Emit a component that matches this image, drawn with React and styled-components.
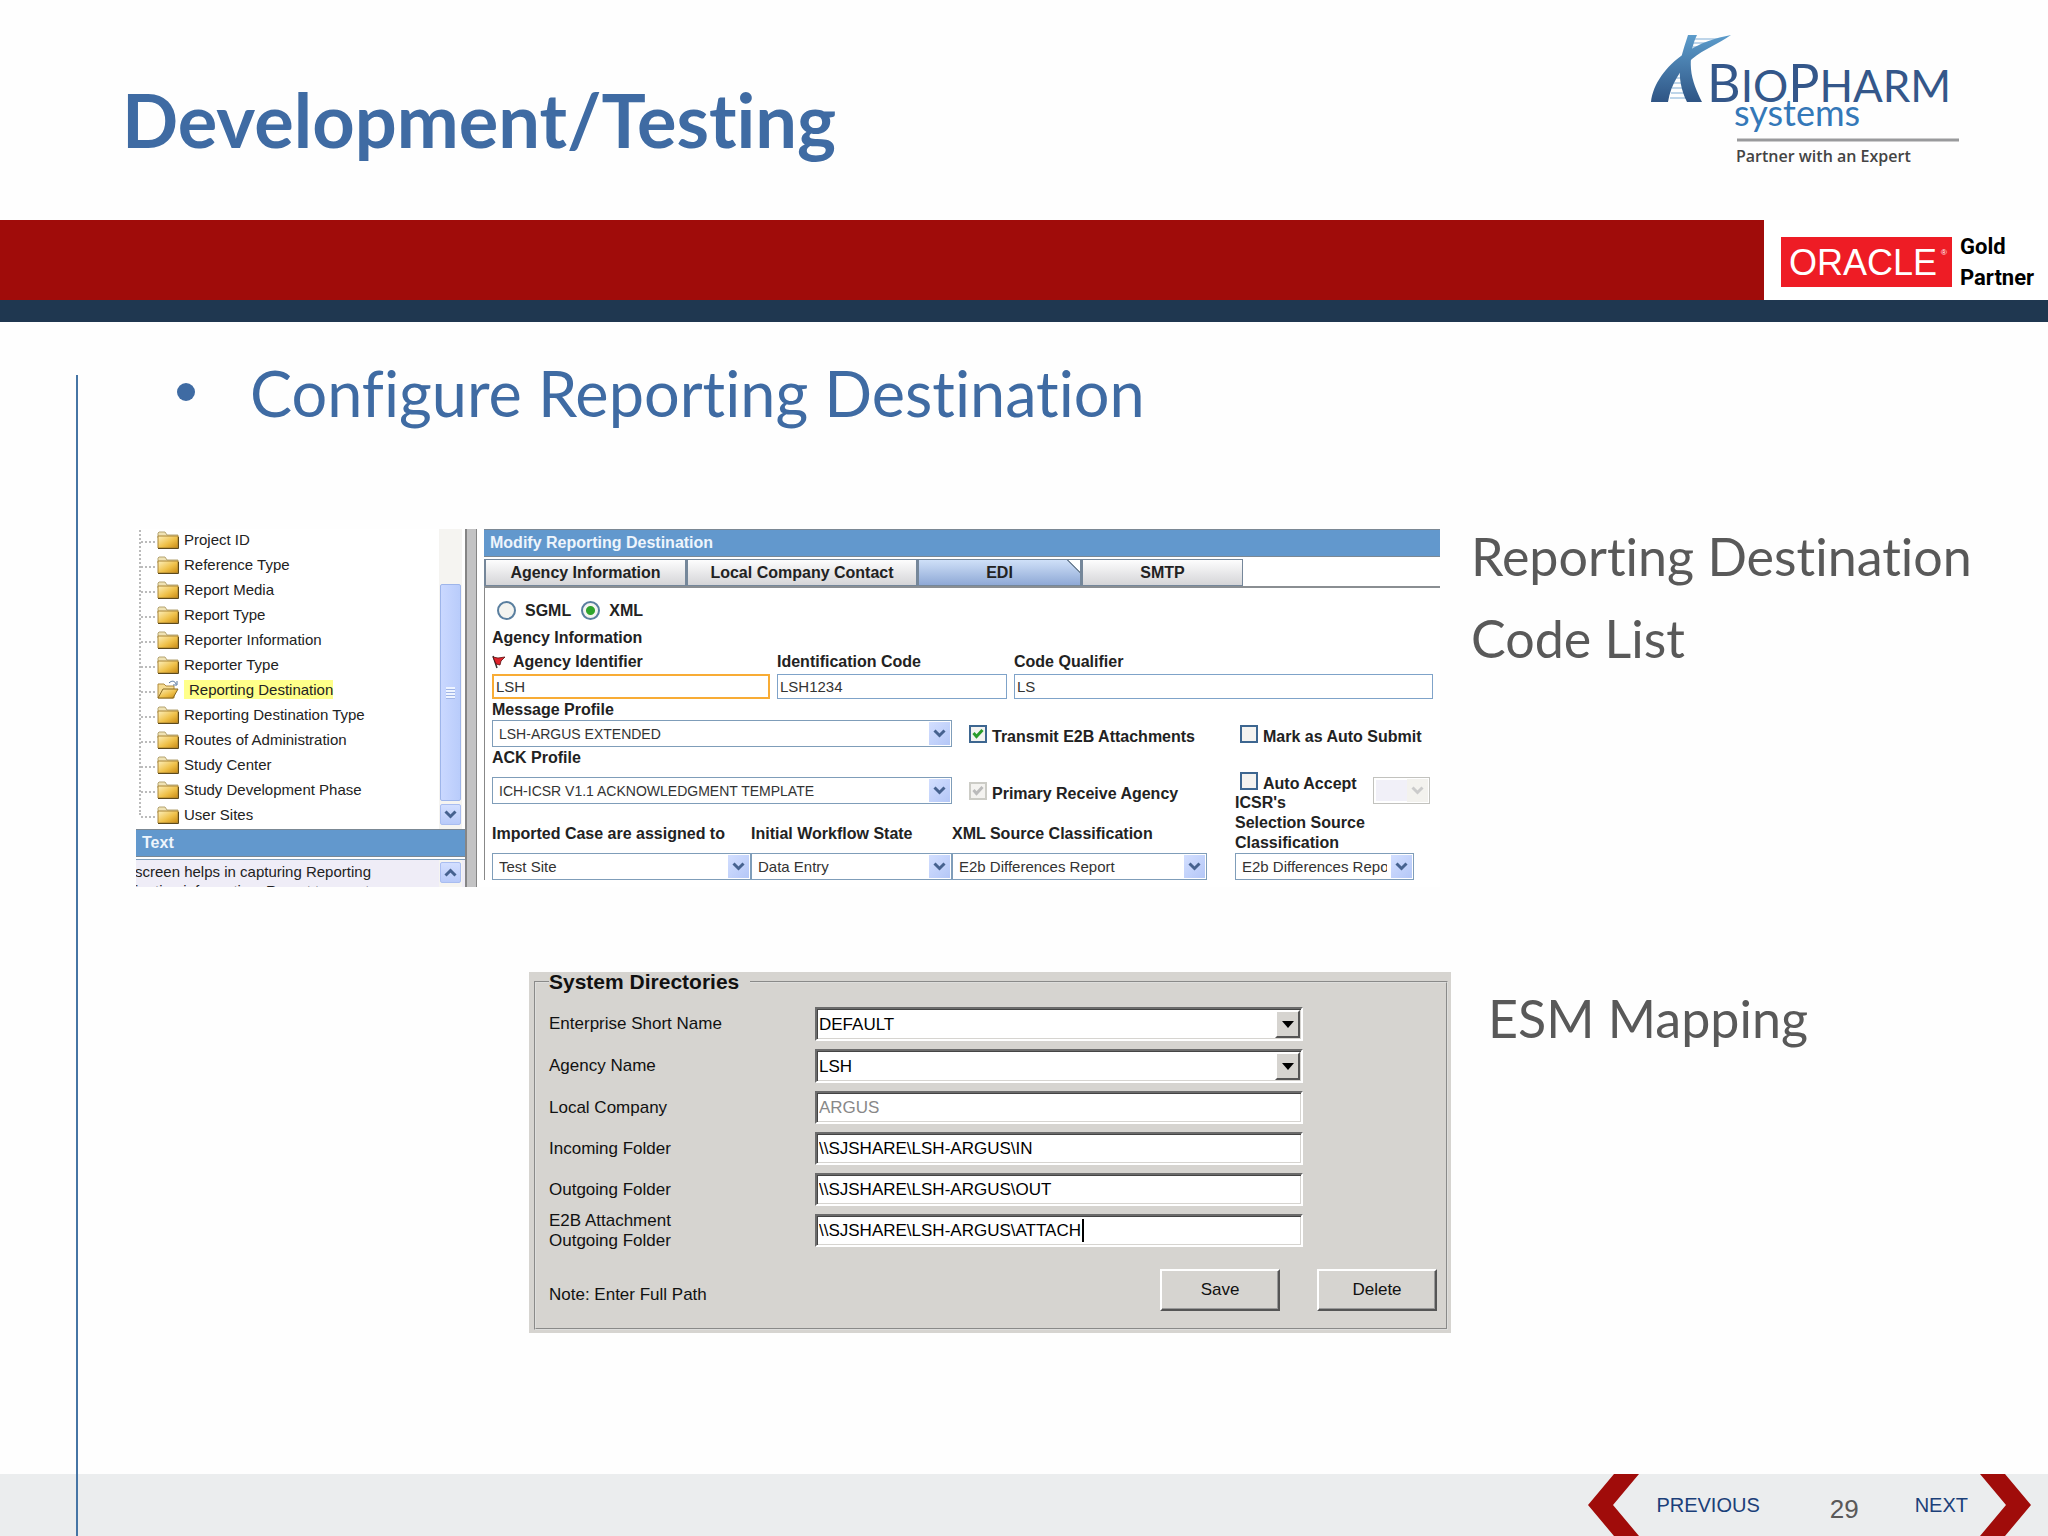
import React from "react";
import styled, { createGlobalStyle } from "styled-components";

const GlobalStyle = createGlobalStyle`
  *, *::before, *::after {
    box-sizing: border-box;
  }
  body {
    margin: 0;
    background: #fefefe;
    font-family: "Liberation Sans", Arial, sans-serif;
    font-variant-ligatures: no-common-ligatures;
  }
  button, input, select {
    font-family: inherit;
    margin: 0;
  }
`;

const Slide = styled.div`
  min-height: 100vh;
  display: flex;
  flex-direction: column;
  overflow: hidden;
`;

/* ---------- header ---------- */

const Header = styled.header`
  height: 220px;
  display: flex;
  justify-content: space-between;
  padding: 30px 84px 0 122px;
`;

const Title = styled.h1`
  margin: 0;
  font-family: Lato, Carlito, sans-serif;
  font-weight: bold;
  font-size: 74px;
  line-height: 180px;
  color: #3f6ba3;
`;

const Band = styled.div`
  height: 80px;
  display: flex;
  justify-content: flex-end;
  background: #a00c0a;
`;

const PartnerBadge = styled.div`
  width: 284px;
  display: flex;
  gap: 8px;
  padding: 17px 0 0 17px;
  background: #fff;
`;

const PartnerText = styled.p`
  margin: -6px 0 0;
  font: bold 22px/31px Roboto, Arial, sans-serif;
  color: #000;
`;

const Rule = styled.div`
  height: 22px;
  background: #1f3750;
`;

/* ---------- body ---------- */

const Main = styled.main`
  flex: 1;
  margin: 53px 0 0 76px;
  border-left: 2px solid #4675a5;
`;

const BulletList = styled.ul`
  list-style: none;
  margin: 0;
  padding: 0 0 0 97px;
`;

const BulletItem = styled.li`
  display: flex;
  height: 154px;
  font-family: Lato, Carlito, sans-serif;
  font-size: 63px;
  line-height: 36px;
  color: #3f6ba3;
  &::before {
    content: "";
    width: 18px;
    height: 18px;
    margin: 8px 55px 0 2px;
    border-radius: 50%;
    background: #3f6ba3;
  }
`;

const ExhibitRow = styled.section`
  display: grid;
  grid-template-columns: ${(p) => p.$columns};
  margin-bottom: 85px;
`;

const Caption = styled.p`
  grid-column: 3;
  margin: ${(p) => p.$top} 0 0;
  padding-left: ${(p) => p.$indent};
  font-family: Lato, Carlito, sans-serif;
  font-size: 52px;
  line-height: 82px;
  color: #595959;
`;

/* ---------- reporting destination screen ---------- */

const Screen = styled.div`
  grid-column: 2;
  height: 358px;
  display: grid;
  grid-template-columns: 329fr 12px 7px 956fr;
  overflow: hidden;
  background: #fff;
  font-size: 15px;
  color: #222;
`;

const Sidebar = styled.div`
  min-width: 0;
  display: flex;
  flex-direction: column;
`;

const TreePane = styled.div`
  height: 300px;
  display: flex;
  justify-content: space-between;
`;

const Tree = styled.ul`
  list-style: none;
  margin: -2px 0 14px 3px;
  padding: 0;
  border-left: 2px dotted #bbb;
`;

const TreeItem = styled.li`
  height: 25px;
  display: flex;
  align-items: center;
  &::before {
    content: "";
    width: 14px;
    border-top: 2px dotted #bbb;
    margin: 4px 2px 0 0;
  }
  & > svg {
    flex: none;
    margin-right: 5px;
  }
`;

const TreeLabel = styled.span`
  line-height: 19px;
  white-space: nowrap;
  ${(p) =>
    p.$active &&
    `
    background: #ffff8a;
    padding-left: 5px;
  `}
`;

const ScrollTrack = styled.div`
  width: 23px;
  margin-right: 3px;
  padding: ${(p) => p.$top} 1px 0;
  display: flex;
  flex-direction: column;
  gap: 3px;
  background: #f5f4f1;
`;

const ScrollThumb = styled.div`
  height: 217px;
  display: grid;
  place-content: center;
  border: 1px solid #9eb5ea;
  border-radius: 2px;
  background: linear-gradient(90deg, #cad8ff, #b9ccfb);
  &::before {
    content: "";
    width: 9px;
    height: 12px;
    background: repeating-linear-gradient(#eef4ff 0 2px, #9fb4e6 2px 3px);
  }
`;

const ScrollButton = styled.button`
  height: 21px;
  padding: 0;
  display: grid;
  place-content: center;
  border: 1px solid #a9bdf0;
  border-radius: 2px;
  background: linear-gradient(#d3dfff, #b8caf9);
`;

const PaneTitle = styled.h2`
  margin: 0;
  height: 28px;
  padding: 0 6px;
  border: solid #7b8894;
  border-width: 1px 0;
  background: #6298cd;
  font-weight: bold;
  font-size: 16px;
  line-height: 26px;
  color: #eef5fc;
`;

const HelpPane = styled.div`
  flex: 1;
  min-height: 0;
  margin-top: 2px;
  display: flex;
  justify-content: space-between;
  border-top: 1px solid #7f9db9;
  background: #efedf7;
  line-height: 19px;
  white-space: nowrap;
  & p {
    margin: 2px 0 0 -1px;
  }
`;

const Splitter = styled.div`
  border: solid #858585;
  border-width: 0 1px 0 2px;
  background: #c3c3c4;
`;

const FormPane = styled.div`
  grid-column: 4;
  min-width: 0;
`;

const Tabs = styled.div`
  display: grid;
  grid-template-columns: 202fr 231fr 164fr 162fr 197fr;
  height: 31px;
  padding-top: 2px;
  border-bottom: 2px solid #8a8e92;
`;

const Tab = styled.button`
  padding: 0;
  border: 1px solid #75879a;
  border-left-width: 2px;
  background: ${(p) =>
    p.$active
      ? "linear-gradient(45deg, transparent 0 93%, #75879a 93% 94%, #fff 94%), linear-gradient(#cfe0f8, #8fa9d6)"
      : "linear-gradient(#fdfdfd, #d5d5d8)"};
  font-size: 16px;
  font-weight: bold;
  color: #222;
`;

const Form = styled.form`
  padding: 8px 0 0 7px;
  border-left: 1px solid #888;
  font-size: 16px;
  font-weight: bold;
`;

const RadioRow = styled.div`
  height: 29px;
  display: flex;
  align-items: center;
  padding-left: 5px;
`;

const RadioLabel = styled.label`
  display: flex;
  align-items: center;
  gap: 9px;
  margin-right: 10px;
`;

const Radio = styled.input`
  appearance: none;
  width: 19px;
  height: 19px;
  border: 2px solid #5a7f9f;
  border-radius: 50%;
  background: #f4f4f0;
  &:checked {
    background: radial-gradient(circle, #2fa52c 0 4px, #f4f4f0 5px);
  }
`;

const SectionLabel = styled.p`
  margin: 0;
  line-height: 25px;
`;

const FieldGrid = styled.div`
  display: grid;
  grid-template-columns: 278fr 230fr 419fr;
  column-gap: 7px;
  padding-right: 7px;
`;

const Field = styled.div`
  min-width: 0;
  display: flex;
  flex-direction: column;
`;

const Label = styled.label`
  height: ${(p) => p.$height || "24px"};
  display: flex;
  align-items: center;
  gap: 8px;
  line-height: 20px;
  white-space: nowrap;
`;

const TextInput = styled.input`
  width: 100%;
  height: 25px;
  padding: 0 2px;
  border: ${(p) => (p.$focus ? "2px solid #f8ac35" : "1px solid #7fa3c9")};
  background: #fff;
  font-size: 15px;
  color: #333;
`;

const SelectFrame = styled.div`
  position: relative;
  height: 27px;
  opacity: ${(p) => (p.$disabled ? 0.6 : 1)};
  & > select {
    appearance: none;
    width: 100%;
    height: 100%;
    padding: 0 26px 0 6px;
    border: 1px solid ${(p) => (p.$disabled ? "#9a9a94" : "#7f9db9")};
    border-radius: 0;
    background: ${(p) => (p.$disabled ? "#e9e7f5" : "#fff")};
    box-shadow: inset 0 0 0 2px #fff;
    font-size: ${(p) => (p.$compact ? "14px" : "15px")};
    color: #333;
    opacity: 1;
  }
`;

const SelectArrow = styled.span`
  position: absolute;
  top: 2px;
  right: 2px;
  bottom: 2px;
  width: 21px;
  display: grid;
  place-content: center;
  background: ${(p) => (p.$disabled ? "#ecebe4" : "linear-gradient(135deg, #d3dfff, #b4c7f7)")};
  pointer-events: none;
`;

const ProfileGrid = styled.div`
  display: grid;
  grid-template-columns: 460fr 283fr 205fr;
`;

const AckField = styled.div`
  display: grid;
  row-gap: 9px;
`;

const CheckColumn = styled.div`
  min-width: 0;
  padding: ${(p) => p.$padding};
`;

const CheckLabel = styled.label`
  height: ${(p) => p.$height || "20px"};
  display: flex;
  align-items: flex-start;
  gap: 5px;
  line-height: 24px;
  white-space: nowrap;
`;

const Checkbox = styled.input`
  appearance: none;
  flex: none;
  width: 18px;
  height: 18px;
  border: 2px solid #3d6690;
  background: #f4f3f0;
  &:disabled {
    border-color: #ccccc6;
  }
`;

const CheckFrame = styled.span`
  position: relative;
  display: flex;
  & > svg {
    position: absolute;
    inset: 3px;
    pointer-events: none;
  }
`;

const AcceptRow = styled.div`
  display: flex;
  justify-content: space-between;
  height: 32px;
  & > ${SelectFrame} {
    width: 57px;
    margin: 5px 5px 0 0;
  }
`;

const SourceGrid = styled.div`
  display: grid;
  grid-template-columns: 259fr 201fr 255fr 28fr 179fr 26fr;
  align-items: end;
`;

const TallLabel = styled.label`
  display: block;
  margin-top: -11px;
  line-height: 20px;
`;

/* ---------- system directories dialog ---------- */

const Dialog = styled.div`
  grid-column: 2;
  height: 361px;
  padding: 0 3px 5px 5px;
  background: #d6d4d0;
  font-size: 17px;
  color: #111;
`;

const Group = styled.fieldset`
  min-width: 0;
  margin: 0;
  padding: 15px 9px 17px 13px;
  border: 2px groove #dededc;
`;

const Legend = styled.legend`
  padding: 0 11px 0 0;
  font-weight: bold;
  font-size: 21px;
  line-height: 20px;
`;

const DirectoryGrid = styled.div`
  display: grid;
  grid-template-columns: 266fr 488fr 134fr;
  row-gap: 8px;
`;

const DirectoryRow = styled.div`
  display: contents;
  & > label {
    grid-column: 1;
    align-self: center;
    margin: -4px 0;
    line-height: 20px;
    white-space: pre-line;
  }
  & > div {
    grid-column: 2;
  }
`;

const SunkenBox = styled.div`
  position: relative;
  height: ${(p) => (p.$select ? "34px" : "33px")};
  border: 2px solid;
  border-color: #6b6b6b #fff #fff #6b6b6b;
  background: #fff;
  box-shadow: inset 1px 1px #444, inset -1px -1px #d6d4d0;
  & > input,
  & > select {
    appearance: none;
    width: 100%;
    height: 100%;
    padding: 0 2px;
    border: 0;
    border-radius: 0;
    background: transparent;
    font-size: 17px;
    color: #000;
  }
  & > input:disabled {
    color: #888;
  }
`;

const ArrowButton = styled.span`
  position: absolute;
  top: 1px;
  right: 1px;
  bottom: 1px;
  width: 25px;
  display: grid;
  place-content: center;
  border: 2px solid;
  border-color: #fff #555 #555 #fff;
  background: #d6d4d0;
  pointer-events: none;
`;

const Caret = styled.span`
  position: absolute;
  top: 3px;
  bottom: 3px;
  left: 265px;
  width: 2px;
  background: #000;
`;

const DialogFooter = styled.div`
  display: flex;
  align-items: center;
  margin-top: 22px;
  gap: 37px;
`;

const Note = styled.p`
  flex: 1;
  margin: 10px 0 0;
`;

const PushButton = styled.button`
  width: 120px;
  height: 42px;
  border: 2px solid;
  border-color: #fff #555 #555 #fff;
  box-shadow: inset -1px -1px #999;
  background: #d6d4d0;
  font-size: 17px;
  color: #111;
`;

/* ---------- footer ---------- */

const Footer = styled.footer`
  height: 62px;
  padding-left: 76px;
  background: #ebedee;
`;

const Pager = styled.nav`
  height: 100%;
  display: flex;
  justify-content: flex-end;
  align-items: center;
  padding-right: 17px;
  border-left: 2px solid #4675a5;
`;

const PageLink = styled.a`
  display: flex;
  align-items: center;
  gap: ${(p) => p.$gap};
  font-size: 20px;
  color: #1b4079;
  text-decoration: none;
`;

const PageNumber = styled.span`
  margin: 8px 56px 0 70px;
  font-size: 26px;
  color: #595959;
`;

/* ---------- drawings ---------- */

const BioPharmLogo = () => (
  <svg width="314" height="140" viewBox="0 0 314 140" role="img" aria-label="BioPharm Systems">
    <defs>
      <linearGradient id="helix" x1="0" y1="0" x2="0" y2="1">
        <stop offset="0" stopColor="#5c9ccb" />
        <stop offset="1" stopColor="#2f5585" />
      </linearGradient>
    </defs>
    <g stroke="#a9c8e2" strokeWidth="1.5">
      <path d="M44 9h24M43 13h16M43 17h9M24 48h18M22 53h19M22 58h20M21 63h22M20 68h24" />
    </g>
    <path
      d="M1 72C3 54 16 36 34 24 50 12 66 8 81 5 68 14 54 19 42 29 30 40 21 54 18 72Z"
      fill="url(#helix)"
    />
    <path d="M38 5h9c-5 10-7 22-6 34 1 12 6 23 11 33H37C31 60 29 48 30 36 31 25 35 15 38 5Z" fill="url(#helix)" />
    <g fontFamily="Lato, sans-serif" fill="#34578a">
      <text x="57" y="72" fontSize="52">
        B<tspan fontSize="44">IO</tspan>P<tspan fontSize="44">HARM</tspan>
      </text>
      <text x="84" y="96" fontSize="36" fill="#3478b8">
        systems
      </text>
    </g>
    <path d="M87 110h222" stroke="#999a9c" strokeWidth="3" />
    <text x="86" y="132" fontFamily="Open Sans, sans-serif" fontWeight="600" fontSize="16" fill="#444">
      Partner with an Expert
    </text>
  </svg>
);

const OracleLogo = () => (
  <svg width="171" height="50" viewBox="0 0 171 50" role="img" aria-label="Oracle">
    <rect width="171" height="50" fill="#ee1c25" />
    <text x="8" y="38" fontFamily="Liberation Sans, sans-serif" fontSize="36" fill="#fff">
      ORACLE
    </text>
    <text x="160" y="18" fontFamily="Liberation Sans, sans-serif" fontSize="8" fill="#fff">
      ®
    </text>
  </svg>
);

const FolderIcon = ({ open }) => (
  <svg width="22" height="20" viewBox="0 0 22 20" aria-hidden="true">
    <defs>
      <linearGradient id="folder" x1="0" y1="0" x2="1" y2="1">
        <stop offset="0" stopColor="#fdf0bd" />
        <stop offset="0.55" stopColor="#efc14a" />
        <stop offset="1" stopColor="#c98a12" />
      </linearGradient>
    </defs>
    {open ? (
      <>
        <path d="M1 18V4h6l2 2h8v12Z" fill="#f6dc92" stroke="#b08a3c" />
        <path d="M1 18 6 9h15l-5 9Z" fill="url(#folder)" stroke="#8a6a20" />
        <path d="M12 3c3-3 6-2 7 1M20 1v4h-4" fill="none" stroke="#54749c" />
      </>
    ) : (
      <>
        <path d="M1 6V3l1-1h6l2 3h11v3H1Z" fill="#efe2b4" stroke="#b5a472" />
        <path d="M1 6h20v12H1Z" fill="url(#folder)" stroke="#a98434" />
        <path d="M1 18.5h20.500V7" fill="none" stroke="#5e4a1c" />
      </>
    )}
  </svg>
);

const Chevron = ({ up, color = "#46628f" }) => (
  <svg width="13" height="9" viewBox="0 0 13 9" aria-hidden="true">
    <path d={up ? "M1.500 7.500 6.500 2.500l5 5" : "M1.500 1.500l5 5 5-5"} fill="none" stroke={color} strokeWidth="3" />
  </svg>
);

const Triangle = () => (
  <svg width="12" height="7" viewBox="0 0 12 7" aria-hidden="true">
    <path d="M0 0h12L6 7Z" fill="#000" />
  </svg>
);

const Tick = ({ color }) => (
  <svg width="12" height="12" viewBox="0 0 12 12" aria-hidden="true">
    <path d="M1.500 5 4.500 8.500 10.500 2" fill="none" stroke={color} strokeWidth="3" />
  </svg>
);

const Flag = () => (
  <svg width="13" height="14" viewBox="0 0 13 14" aria-hidden="true">
    <path d="M1 1l4 12" stroke="#333" strokeWidth="1.500" />
    <path d="M1 2l5 1 7-1-4 4-1 4-4-1Z" fill="#e0222b" stroke="#5a1010" strokeWidth="0.800" />
  </svg>
);

const PageArrow = ({ next }) => (
  <svg width="51" height="62" viewBox="0 0 51 62" aria-hidden="true">
    <path d={next ? "M0 0h25l26 31-26 31H0l26-31Z" : "M51 0H26L0 31l26 31h25L25 31Z"} fill="#a00c0a" />
  </svg>
);

/* ---------- composed controls ---------- */

const Select = ({ id, value, disabled, compact, ...rest }) => (
  <SelectFrame $disabled={disabled} $compact={compact}>
    <select id={id} disabled={disabled} defaultValue={value} {...rest}>
      <option>{value}</option>
    </select>
    <SelectArrow $disabled={disabled}>
      <Chevron color={disabled ? "#aaa" : undefined} />
    </SelectArrow>
  </SelectFrame>
);

const Check = ({ label, height, ...rest }) => (
  <CheckLabel $height={height}>
    <CheckFrame>
      <Checkbox type="checkbox" {...rest} />
      {rest.defaultChecked && <Tick color={rest.disabled ? "#bbb" : "#2a9c2a"} />}
    </CheckFrame>
    {label}
  </CheckLabel>
);

const treeItems = [
  "Project ID",
  "Reference Type",
  "Report Media",
  "Report Type",
  "Reporter Information",
  "Reporter Type",
  "Reporting Destination",
  "Reporting Destination Type",
  "Routes of Administration",
  "Study Center",
  "Study Development Phase",
  "User Sites",
];

const tabs = ["Agency Information", "Local Company Contact", "EDI", "SMTP"];

const directories = [
  { id: "enterprise", label: "Enterprise Short Name", value: "DEFAULT", select: true },
  { id: "agency", label: "Agency Name", value: "LSH", select: true },
  { id: "company", label: "Local Company", value: "ARGUS", disabled: true },
  { id: "incoming", label: "Incoming Folder", value: "\\\\SJSHARE\\LSH-ARGUS\\IN" },
  { id: "outgoing", label: "Outgoing Folder", value: "\\\\SJSHARE\\LSH-ARGUS\\OUT" },
  { id: "attach", label: "E2B Attachment\nOutgoing Folder", value: "\\\\SJSHARE\\LSH-ARGUS\\ATTACH", caret: true },
];

const ReportingScreen = () => (
  <Screen>
    <Sidebar>
      <TreePane>
        <Tree>
          {treeItems.map((item) => {
            const active = item === "Reporting Destination";
            return (
              <TreeItem key={item}>
                <FolderIcon open={active} />
                <TreeLabel $active={active}>{item}</TreeLabel>
              </TreeItem>
            );
          })}
        </Tree>
        <ScrollTrack $top="55px">
          <ScrollThumb />
          <ScrollButton type="button" aria-label="Scroll down">
            <Chevron />
          </ScrollButton>
        </ScrollTrack>
      </TreePane>
      <PaneTitle>Text</PaneTitle>
      <HelpPane>
        <p>
          screen helps in capturing Reporting
          <br />
          ination information. Report to agent
        </p>
        <ScrollTrack $top="2px">
          <ScrollButton type="button" aria-label="Scroll up">
            <Chevron up />
          </ScrollButton>
        </ScrollTrack>
      </HelpPane>
    </Sidebar>
    <Splitter />
    <FormPane>
      <PaneTitle>Modify Reporting Destination</PaneTitle>
      <Tabs>
        {tabs.map((tab) => (
          <Tab key={tab} type="button" $active={tab === "EDI"}>
            {tab}
          </Tab>
        ))}
      </Tabs>
      <Form>
        <RadioRow>
          <RadioLabel>
            <Radio type="radio" name="format" />
            SGML
          </RadioLabel>
          <RadioLabel>
            <Radio type="radio" name="format" defaultChecked />
            XML
          </RadioLabel>
        </RadioRow>
        <SectionLabel>Agency Information</SectionLabel>
        <FieldGrid>
          <Field>
            <Label htmlFor="identifier">
              <Flag />
              Agency Identifier
            </Label>
            <TextInput id="identifier" defaultValue="LSH" $focus />
          </Field>
          <Field>
            <Label htmlFor="code">Identification Code</Label>
            <TextInput id="code" defaultValue="LSH1234" />
          </Field>
          <Field>
            <Label htmlFor="qualifier">Code Qualifier</Label>
            <TextInput id="qualifier" defaultValue="LS" />
          </Field>
        </FieldGrid>
        <ProfileGrid>
          <Field>
            <Label htmlFor="message" $height="21px">
              Message Profile
            </Label>
            <Select id="message" value="LSH-ARGUS EXTENDED" compact />
            <AckField>
              <Label htmlFor="ack" $height="21px">
                ACK Profile
              </Label>
              <Select id="ack" value="ICH-ICSR V1.1 ACKNOWLEDGMENT TEMPLATE" compact />
            </AckField>
          </Field>
          <CheckColumn $padding="26px 0 0 17px">
            <Check label="Transmit E2B Attachments" height="57px" defaultChecked />
            <Check label="Primary Receive Agency" defaultChecked disabled />
          </CheckColumn>
          <CheckColumn $padding="26px 5px 0 5px">
            <Check label="Mark as Auto Submit" height="47px" />
            <AcceptRow>
              <Check label="Auto Accept" />
              <Select value="" disabled aria-label="Auto accept mode" />
            </AcceptRow>
          </CheckColumn>
        </ProfileGrid>
        <SourceGrid>
          <Field>
            <Label htmlFor="assigned" $height="39px">
              Imported Case are assigned to
            </Label>
            <Select id="assigned" value="Test Site" />
          </Field>
          <Field>
            <Label htmlFor="workflow" $height="39px">
              Initial Workflow State
            </Label>
            <Select id="workflow" value="Data Entry" />
          </Field>
          <Field>
            <Label htmlFor="xmlsource" $height="39px">
              XML Source Classification
            </Label>
            <Select id="xmlsource" value="E2b Differences Report" />
          </Field>
          <span />
          <Field>
            <TallLabel htmlFor="icsr">
              ICSR's
              <br />
              Selection Source
              <br />
              Classification
            </TallLabel>
            <Select id="icsr" value="E2b Differences Report" />
          </Field>
        </SourceGrid>
      </Form>
    </FormPane>
  </Screen>
);

const DirectoriesDialog = () => (
  <Dialog>
    <Group>
      <Legend>System Directories</Legend>
      <DirectoryGrid>
        {directories.map((d) => (
          <DirectoryRow key={d.id}>
            <label htmlFor={d.id}>{d.label}</label>
            <SunkenBox $select={d.select}>
              {d.select ? (
                <select id={d.id} defaultValue={d.value}>
                  <option>{d.value}</option>
                </select>
              ) : (
                <input id={d.id} defaultValue={d.value} disabled={d.disabled} />
              )}
              {d.select && (
                <ArrowButton>
                  <Triangle />
                </ArrowButton>
              )}
              {d.caret && <Caret />}
            </SunkenBox>
          </DirectoryRow>
        ))}
      </DirectoryGrid>
      <DialogFooter>
        <Note>Note: Enter Full Path</Note>
        <PushButton type="button">Save</PushButton>
        <PushButton type="button">Delete</PushButton>
      </DialogFooter>
    </Group>
  </Dialog>
);

const App = () => {
  return (
    <Slide>
      <GlobalStyle />
      <Header>
        <Title>Development/Testing</Title>
        <BioPharmLogo />
      </Header>
      <Band>
        <PartnerBadge>
          <OracleLogo />
          <PartnerText>
            Gold
            <br />
            Partner
          </PartnerText>
        </PartnerBadge>
      </Band>
      <Rule />
      <Main>
        <BulletList>
          <BulletItem>Configure Reporting Destination</BulletItem>
        </BulletList>
        <ExhibitRow $columns="58fr 1304fr 608fr">
          <ReportingScreen />
          <Caption $indent="31px" $top="-14px">
            Reporting Destination
            <br />
            Code List
          </Caption>
        </ExhibitRow>
        <ExhibitRow $columns="451fr 922fr 597fr">
          <DirectoriesDialog />
          <Caption $indent="37px" $top="5px">
            ESM Mapping
          </Caption>
        </ExhibitRow>
      </Main>
      <Footer>
        <Pager>
          <PageLink href="#previous" $gap="17px">
            <PageArrow />
            PREVIOUS
          </PageLink>
          <PageNumber>29</PageNumber>
          <PageLink href="#next" $gap="12px">
            NEXT
            <PageArrow next />
          </PageLink>
        </Pager>
      </Footer>
    </Slide>
  );
};

export default App;
